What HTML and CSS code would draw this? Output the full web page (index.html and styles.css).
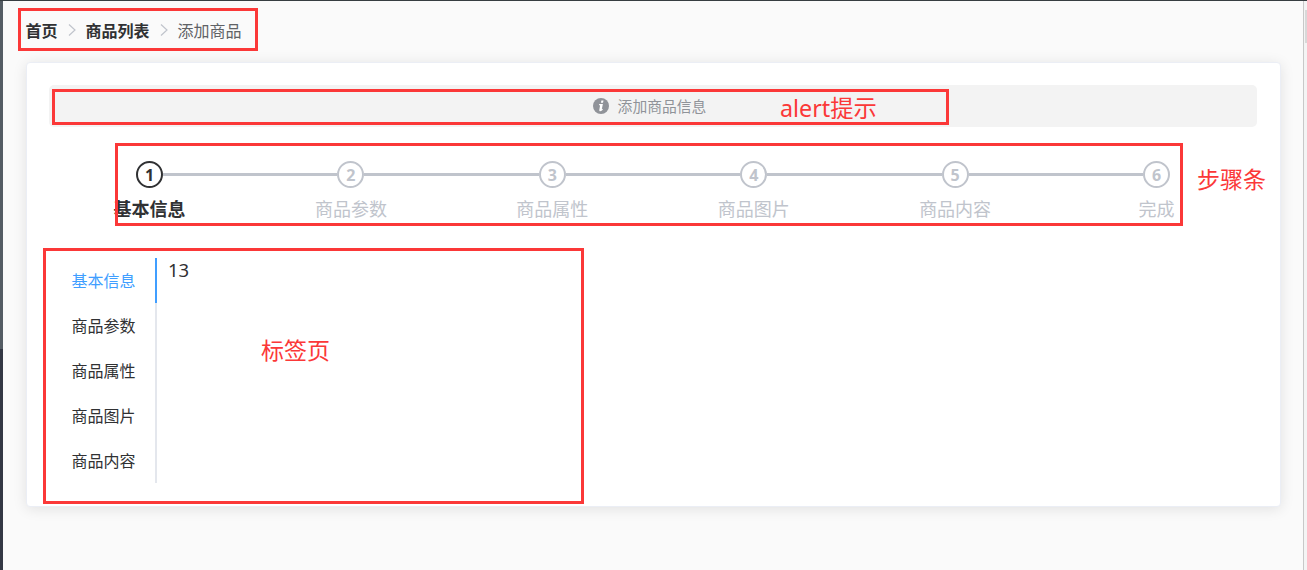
FILE: index.html
```html
<!DOCTYPE html>
<html lang="zh-CN">
<head>
<meta charset="utf-8">
<title>添加商品</title>
<link rel="stylesheet" href="styles.css">
</head>
<body>
<div class="app">
  <aside class="sidebar"><div class="sidebar-active"></div></aside>
  <main class="main">
    <nav class="breadcrumb">
      <a>首页</a>
      <svg class="sep" viewBox="0 0 8 14"><path d="M1 1.5 L7 7 L1 12.5"/></svg>
      <a>商品列表</a>
      <svg class="sep" viewBox="0 0 8 14"><path d="M1 1.5 L7 7 L1 12.5"/></svg>
      <span>添加商品</span>
    </nav>
    <section class="card">
      <div class="alert">
        <svg class="info" viewBox="0 0 16 16"><circle cx="8" cy="8" r="8"/><path d="M8.400 2.500h2.100l-.5 2.200H7.900zM6.200 6h3.700L8.800 11.200l1.100-.5-.2 1.100C8.700 13.500 6 13.900 6.300 12L7.100 7.200H6z"/></svg>
        <span>添加商品信息</span>
      </div>
      <div class="steps">
        <div class="step active"><div class="circle">1</div><div class="line"></div><div class="title">基本信息</div></div>
        <div class="step"><div class="circle">2</div><div class="line"></div><div class="title">商品参数</div></div>
        <div class="step"><div class="circle">3</div><div class="line"></div><div class="title">商品属性</div></div>
        <div class="step"><div class="circle">4</div><div class="line"></div><div class="title">商品图片</div></div>
        <div class="step"><div class="circle">5</div><div class="line"></div><div class="title">商品内容</div></div>
        <div class="step last"><div class="circle">6</div><div class="title">完成</div></div>
      </div>
      <div class="tabs">
        <div class="tab-nav">
          <div class="tab selected">基本信息</div>
          <div class="tab">商品参数</div>
          <div class="tab">商品属性</div>
          <div class="tab">商品图片</div>
          <div class="tab">商品内容</div>
        </div>
        <div class="tab-content">13</div>
      </div>
    </section>
  </main>
  <div class="scrollbar"><div class="thumb"></div></div>
</div>
<div class="mark mark-crumb"></div>
<div class="mark mark-alert"></div>
<div class="mark mark-steps"></div>
<div class="mark mark-tabs"></div>
<div class="note note-alert">alert提示</div>
<div class="note note-steps">步骤条</div>
<div class="note note-tabs">标签页</div>
</body>
</html>
```
FILE: styles.css
```css
* { box-sizing: border-box; }
body {
  margin: 0;
  font-family: "Noto Sans", "Noto Sans CJK SC", sans-serif;
  color: #303133;
  background: #fafafa;
  overflow: hidden;
}
.app { display: flex; height: 570px; border-top: 1px solid #373d41; }
.sidebar { width: 3px; background: #333744; }
.sidebar-active { height: 348px; background: #545c64; }
.main { flex: 1; padding: 13px 22px 0 23px; }
.breadcrumb {
  display: flex;
  align-items: center;
  height: 32px;
  margin-left: -0.5px;
  font: 16px/32px "Noto Sans CJK SC", sans-serif;
  color: #606266;
}
.breadcrumb a { font-weight: 700; color: #303133; }
.sep { width: 8px; height: 14px; margin: 0 10px; fill: none; stroke: #c0c4cc; stroke-width: 1.2; }
.card {
  height: 445px;
  margin-top: 16px;
  padding: 22px 23px 0 22px;
  border: 1px solid #ebeef5;
  border-radius: 4px;
  background: #fff;
  box-shadow: 0 2px 14px rgba(0, 0, 0, .1);
}
.alert {
  display: flex;
  align-items: center;
  justify-content: center;
  gap: 9px;
  height: 42px;
  padding-right: 7px;
  border-radius: 5px;
  background: #f3f3f3;
  color: #909399;
  font: 14.8px/42px "Noto Sans CJK SC", sans-serif;
}
.info { width: 16px; height: 16px; margin-top: -1px; fill: #909399; }
.info path { fill: #fff; }
.steps { display: flex; margin: 34px 87px 0 87px; }
.step { display: grid; grid-template-columns: 27px 1fr; flex: 1; align-items: center; color: #c0c4cc; }
.step.last { flex: 0 0 27px; grid-template-columns: 27px; }
.circle {
  height: 27px;
  border: 2px solid #c0c4cc;
  border-radius: 50%;
  text-align: center;
  font: 700 16px/24px "Open Sans", sans-serif;
}
.line { height: 3px; background: #c0c4cc; }
.title {
  grid-column: 1;
  width: 127px;
  margin-left: -50px;
  text-align: center;
  font: 18px/40px "Noto Sans CJK SC", sans-serif;
}
.step.active { color: #303133; }
.step.active .circle { border-color: #303133; }
.step.active .title { font-weight: 700; }
.tabs { display: flex; gap: 11px; margin-top: 30px; }
.tab-nav { width: 108px; height: 225px; }
.tab {
  height: 45px;
  padding-right: 19.5px;
  border-right: 2px solid #e4e7ed;
  text-align: right;
  font: 16px/45px "Noto Sans CJK SC", sans-serif;
}
.tab.selected { color: #409eff; border-color: #409eff; }
.tab-content { font-size: 18.5px; line-height: 24px; }
.scrollbar { width: 4px; padding-top: 9px; border-left: 1px solid #c8c8c8; background: #f4f4f4; }
.thumb { height: 33px; margin-left: 1px; background: #d8d8d8; }

/* Annotation frames and captions over the page */
.mark { position: absolute; border: 3px solid #fb3838; }
.mark-crumb { left: 18px; top: 8px; width: 240px; height: 43px; }
.mark-alert { left: 52px; top: 89px; width: 897px; height: 36px; }
.mark-steps { left: 115px; top: 143px; width: 1068px; height: 83px; }
.mark-tabs { left: 43px; top: 248px; width: 541px; height: 256px; }
.note { position: absolute; color: #fb3838; font-size: 23px; line-height: 32px; white-space: nowrap; }
.note-alert { left: 780px; top: 92px; font-size: 23.3px; }
.note-steps { left: 1197px; top: 163px; }
.note-tabs { left: 261px; top: 334px; }
```
